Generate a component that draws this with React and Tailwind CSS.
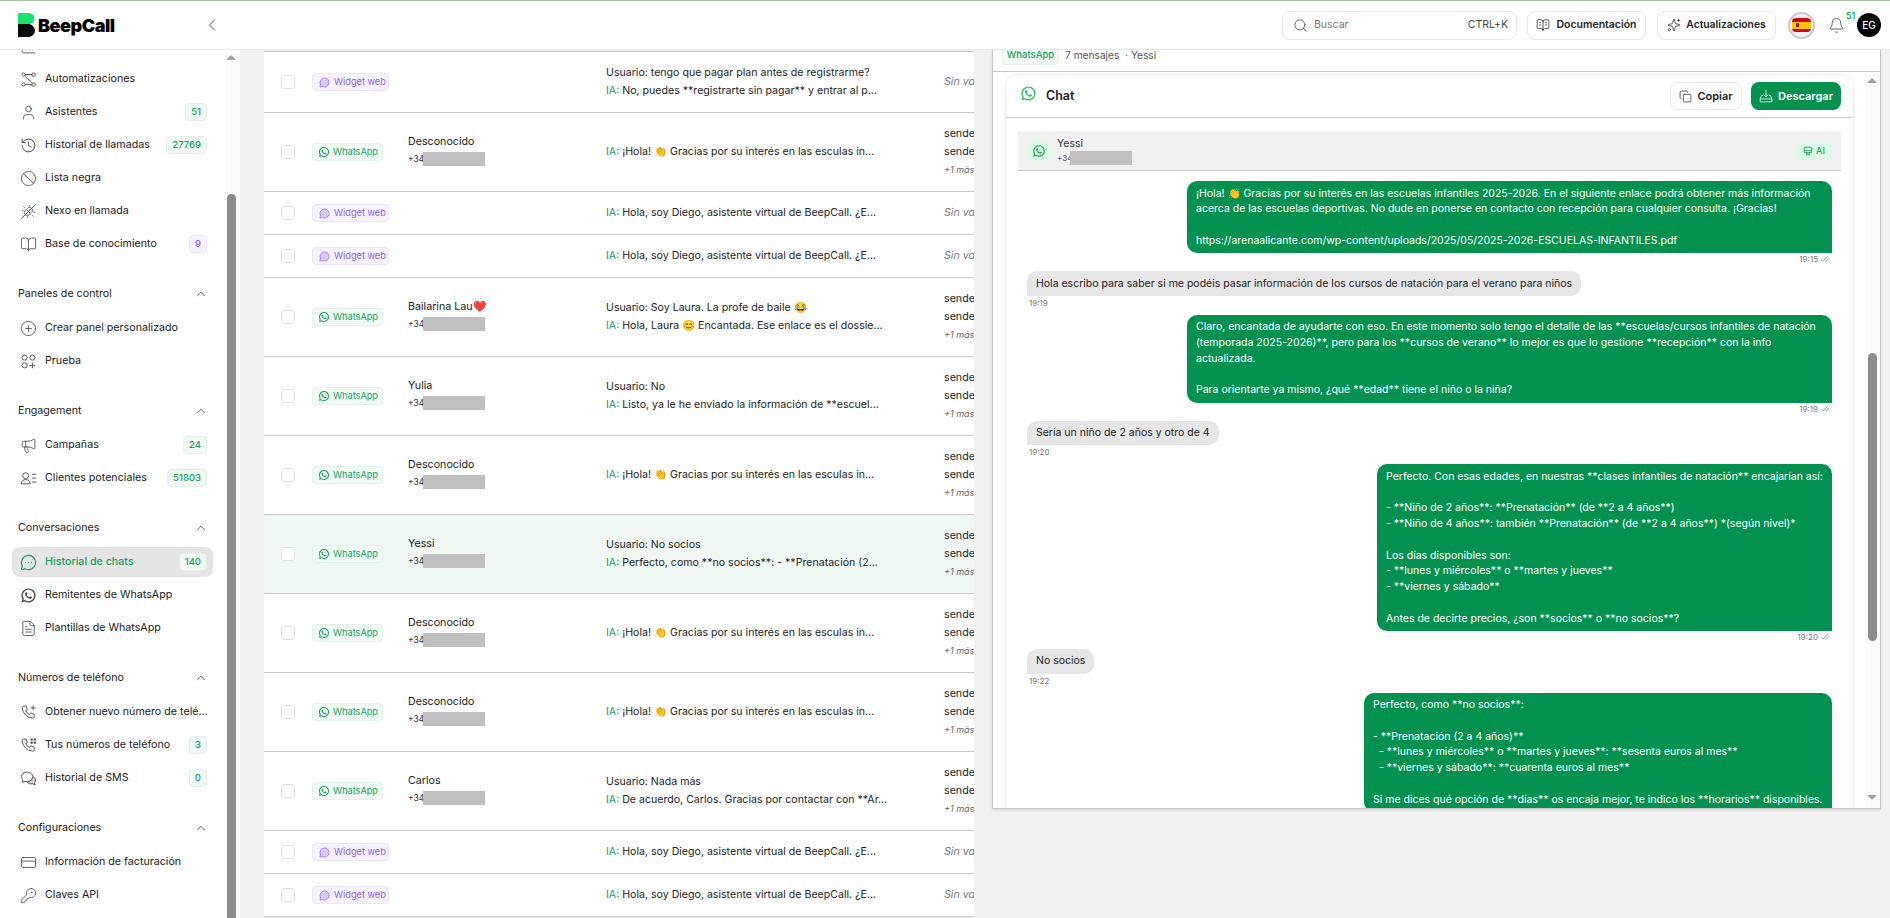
import {
  Ban, BookOpen, ChevronLeft, ChevronUp, CirclePlus, Copy, CreditCard, FileText, History, Bell,
  KeyRound, Megaphone, MessageCircle, MessageCircleMore, Search, Sparkles, User, BarChart3,
  CheckCheck, BookOpenText,
} from 'lucide-react'
import { RiWhatsappLine } from 'react-icons/ri'

const font = { fontFamily: 'Inter, "Noto Sans", sans-serif' }

function AutoIcon(props) {
  return (
    <svg viewBox="0 0 24 24" fill="none" stroke="currentColor" strokeWidth="1.3" {...props}>
      <circle cx="5" cy="5" r="2.2" />
      <circle cx="5" cy="19" r="2.2" />
      <rect x="17" y="3" width="4.4" height="4.4" rx="1" />
      <rect x="17" y="17" width="4.4" height="4.4" rx="1" />
      <path d="M7.2 5H17M7.2 19H17M6.5 7l11 10" />
    </svg>
  )
}

function TestIcon(props) {
  return (
    <svg viewBox="0 0 24 24" fill="none" stroke="currentColor" strokeWidth="1.3" {...props}>
      <circle cx="6.5" cy="6.5" r="3.6" />
      <circle cx="17.5" cy="6.5" r="3.6" />
      <circle cx="6.5" cy="17.5" r="3.6" />
      <path d="M17.5 13.5v8M13.5 17.5h8" />
    </svg>
  )
}

function LeadsIcon(props) {
  return (
    <svg viewBox="0 0 24 24" fill="none" stroke="currentColor" strokeWidth="1.3" {...props}>
      <circle cx="8" cy="8" r="4.2" />
      <path d="M1.5 19.5c.6-4 3.2-6 6.5-6s5.900 2 6.500 6H1.500zM17 6h6M17 11.500h6M17 17h6" />
    </svg>
  )
}

function PhoneGridIcon(props) {
  return (
    <svg viewBox="0 0 24 24" fill="none" stroke="currentColor" strokeWidth="1.3" {...props}>
      <path d="M5 3h3.500l2 5-2.500 1.500a11 11 0 0 0 5.500 5.500l1.500-2.500 5 2v3.500a2 2 0 0 1-2 2A16 16 0 0 1 3 5a2 2 0 0 1 2-2z" />
      <path fill="currentColor" stroke="none" d="M15 2h3v3h-3zM19.500 2h3v3h-3zM15 6.500h3v3h-3zM19.500 6.500h3v3h-3z" />
    </svg>
  )
}

function PhonePlusIcon(props) {
  return (
    <svg viewBox="0 0 24 24" fill="none" stroke="currentColor" strokeWidth="1.3" {...props}>
      <path d="M5 3h3.500l2 5-2.500 1.500a11 11 0 0 0 5.500 5.500l1.500-2.500 5 2v3.500a2 2 0 0 1-2 2A16 16 0 0 1 3 5a2 2 0 0 1 2-2z" />
      <path d="M18.500 2v7M15 5.500h7" />
    </svg>
  )
}

function SmsIcon(props) {
  return (
    <svg viewBox="0 0 24 24" fill="none" stroke="currentColor" strokeWidth="1.3" {...props}>
      <path d="M10 3c-4.700 0-8 2.900-8 6.500 0 1.700.8 3.200 2 4.400L3 17.500l4-1.600c1 .4 2 .6 3 .6 4.700 0 8-3.300 8-7S14.700 3 10 3z" />
      <path fill="currentColor" fillOpacity=".25" d="M18.500 9.500c2.200 1 3.500 2.700 3.500 4.800 0 1.300-.5 2.400-1.400 3.300l.9 3.400-3.700-1.700c-.8.200-1.500.3-2.300.3-2.300 0-4.500-1-5.500-3.100" />
    </svg>
  )
}

function PlugOffIcon(props) {
  return (
    <svg viewBox="0 0 24 24" fill="none" stroke="currentColor" strokeWidth="1.3" {...props}>
      <path d="M2 22 22 2" />
      <path d="m9 9 6 6-1.500 1.500a4.200 4.200 0 0 1-6-6zM10.500 7.500a4.200 4.200 0 0 1 6 6" />
      <path d="M3 11h2M13 3v2M21 13h-2M11 21v-2M5 5l1.500 1.500M19 19l-1.500-1.500" />
    </svg>
  )
}

function TrayDownIcon(props) {
  return (
    <svg viewBox="0 0 24 24" fill="none" stroke="currentColor" strokeWidth="1.3" {...props}>
      <path d="M12 2v11M8 9.500l4 4 4-4" />
      <path d="M7 11H4.500L2 17v5h20v-5l-2.500-6H17M2 17h20" />
    </svg>
  )
}

function MonitorIcon(props) {
  return (
    <svg viewBox="0 0 24 24" fill="none" stroke="currentColor" strokeWidth="2.2" {...props}>
      <rect x="3" y="3" width="18" height="13" rx="2" />
      <path d="M3 11.500h18M9 16v4M15 16v4M7 21h10" />
    </svg>
  )
}

const iconClass = 'h-[17px] w-[17px] shrink-0 text-[#4a4a4a]'

const sections = [
  {
    items: [
      { icon: <AutoIcon className={iconClass} />, label: 'Automatizaciones' },
      { icon: <User className={iconClass} strokeWidth={1.2} />, label: 'Asistentes', badge: '51' },
      { icon: <History className={iconClass} strokeWidth={1.4} />, label: 'Historial de llamadas', badge: '27769' },
      { icon: <Ban className={iconClass} strokeWidth={1.2} />, label: 'Lista negra' },
      { icon: <PlugOffIcon className={iconClass} />, label: 'Nexo en llamada' },
      { icon: <BookOpen className={iconClass} strokeWidth={1.2} />, label: 'Base de conocimiento', badge: '9', purple: true },
    ],
  },
  {
    title: 'Paneles de control',
    items: [
      { icon: <CirclePlus className={iconClass} strokeWidth={1.2} />, label: 'Crear panel personalizado' },
      { icon: <TestIcon className={iconClass} />, label: 'Prueba' },
    ],
  },
  {
    title: 'Engagement',
    items: [
      { icon: <Megaphone className={iconClass} strokeWidth={1.2} />, label: 'Campañas', badge: '24' },
      { icon: <LeadsIcon className={iconClass} />, label: 'Clientes potenciales', badge: '51803' },
    ],
  },
  {
    title: 'Conversaciones',
    items: [
      { icon: <MessageCircleMore className="h-[17px] w-[17px] shrink-0 text-[#16a05d]" strokeWidth={1.6} />, label: 'Historial de chats', badge: '140', active: true },
      { icon: <RiWhatsappLine className={iconClass} />, label: 'Remitentes de WhatsApp' },
      { icon: <FileText className={iconClass} strokeWidth={1.2} />, label: 'Plantillas de WhatsApp' },
    ],
  },
  {
    title: 'Números de teléfono',
    items: [
      { icon: <PhonePlusIcon className={iconClass} />, label: 'Obtener nuevo número de teléfono' },
      { icon: <PhoneGridIcon className={iconClass} />, label: 'Tus números de teléfono', badge: '3' },
      { icon: <SmsIcon className={iconClass} />, label: 'Historial de SMS', badge: '0' },
    ],
  },
  {
    title: 'Configuraciones',
    items: [
      { icon: <CreditCard className={iconClass} strokeWidth={1.2} />, label: 'Información de facturación' },
      { icon: <KeyRound className={iconClass} strokeWidth={1.2} />, label: 'Claves API' },
    ],
  },
]

const hello = '¡Hola! 👏 Gracias por su interés en las esculas in...'
const diego = 'Hola, soy Diego, asistente virtual de BeepCall. ¿E...'

const rows = [
  { kind: 'web', user: 'tengo que pagar plan antes de registrarme?', ai: 'No, puedes **registrarte sin pagar** y entrar al p...', h: 'h-[61px]' },
  { kind: 'wa', name: 'Desconocido', ai: hello },
  { kind: 'web', ai: diego, h: 'h-[43px]' },
  { kind: 'web', ai: diego, h: 'h-[43px]' },
  { kind: 'wa', name: 'Bailarina Lau❤️', user: 'Soy Laura. La profe de baile 😂', ai: 'Hola, Laura 😊 Encantada. Ese enlace es el dossie...' },
  { kind: 'wa', name: 'Yulia', user: 'No', ai: 'Listo, ya le he enviado la información de **escuel...' },
  { kind: 'wa', name: 'Desconocido', ai: hello },
  { kind: 'wa', name: 'Yessi', user: 'No socios', ai: 'Perfecto, como **no socios**: - **Prenatación (2...', active: true },
  { kind: 'wa', name: 'Desconocido', ai: hello },
  { kind: 'wa', name: 'Desconocido', ai: hello },
  { kind: 'wa', name: 'Carlos', user: 'Nada más', ai: 'De acuerdo, Carlos. Gracias por contactar con **Ar...' },
  { kind: 'web', ai: diego, h: 'h-[43px]' },
  { kind: 'web', ai: diego, h: 'h-[43px]' },
]

const messages = [
  { me: true, time: '19:15', w: 'w-[645px]', text: '¡Hola! 👏 Gracias por su interés en las escuelas infantiles 2025-2026. En el siguiente enlace podrá obtener más información acerca de las escuelas deportivas. No dude en ponerse en contacto con recepción para cualquier consulta. ¡Gracias!\n\nhttps://arenaalicante.com/wp-content/uploads/2025/05/2025-2026-ESCUELAS-INFANTILES.pdf' },
  { time: '19:19', text: 'Hola escribo para saber si me podéis pasar información de los cursos de natación para el verano para niños' },
  { me: true, time: '19:19', w: 'w-[645px]', text: 'Claro, encantada de ayudarte con eso. En este momento solo tengo el detalle de las **escuelas/cursos infantiles de natación (temporada 2025-2026)**, pero para los **cursos de verano** lo mejor es que lo gestione **recepción** con la info actualizada.\n\nPara orientarte ya mismo, ¿qué **edad** tiene el niño o la niña?' },
  { time: '19:20', text: 'Sería un niño de 2 años y otro de 4' },
  { me: true, time: '19:20', w: 'w-[455px]', text: 'Perfecto. Con esas edades, en nuestras **clases infantiles de natación** encajarían así:\n\n- **Niño de 2 años**: **Prenatación** (de **2 a 4 años**)\n- **Niño de 4 años**: también **Prenatación** (de **2 a 4 años**) *(según nivel)*\n\nLos días disponibles son:\n- **lunes y miércoles** o **martes y jueves**\n- **viernes y sábado**\n\nAntes de decirte precios, ¿son **socios** o **no socios**?' },
  { time: '19:22', text: 'No socios' },
  { me: true, w: 'w-[468px]', text: 'Perfecto, como **no socios**:\n\n- **Prenatación (2 a 4 años)**\n  - **lunes y miércoles** o **martes y jueves**: **sesenta euros al mes**\n  - **viernes y sábado**: **cuarenta euros al mes**\n\nSi me dices qué opción de **días** os encaja mejor, te indico los **horarios** disponibles.' },
]

function Badge({ children, purple }) {
  return (
    <span
      className={`flex h-[18px] min-w-[18px] items-center justify-center rounded border px-[5px] text-[9.500px] font-medium ${
        purple ? 'border-[#ebe5fb] bg-[#f6f3fe] text-[#8b5cf6]' : 'border-[#dff1e7] bg-[#f0f9f4] text-[#16a05d]'
      }`}
    >
      {children}
    </span>
  )
}

function NavItem({ item }) {
  return (
    <div className={`mb-[3px] flex h-[30px] items-center rounded-lg pl-2 pr-[2px] ${item.active ? 'bg-[#e5e5e5]' : ''}`}>
      <span className="flex w-[25px] shrink-0">{item.icon}</span>
      <span className={`min-w-0 flex-1 truncate text-[10.700px] ${item.active ? 'font-medium text-[#16a05d]' : 'text-[#1a1a1a]'}`}>{item.label}</span>
      {item.badge && (
        <span className="ml-1 shrink-0 pr-[4px]">
          <Badge purple={item.purple}>{item.badge}</Badge>
        </span>
      )}
    </div>
  )
}

function Sidebar() {
  return (
    <aside className="flex h-full w-[240px] shrink-0 bg-white">
      <div className="min-w-0 flex-1 overflow-hidden pl-3 pr-[12px]">
        <div className="-mt-[19px]">
          <NavItem item={{ icon: <BarChart3 className={iconClass} strokeWidth={1.2} />, label: 'Analíticas' }} />
        </div>
        {sections.map((section, i) => (
          <div key={i} className={section.title ? 'mt-[20px]' : ''}>
            {section.title && (
              <div className="mb-[4px] flex h-[30px] items-center justify-between pl-[6px] pr-[5px]">
                <span className="text-[10.700px] text-[#1a1a1a]">{section.title}</span>
                <ChevronUp className="h-[14px] w-[14px] text-[#555]" strokeWidth={1.6} />
              </div>
            )}
            {section.items.map((item) => <NavItem key={item.label} item={item} />)}
          </div>
        ))}
      </div>
      <div className="flex w-[15px] shrink-0 flex-col items-center bg-[#fbfbfb] pr-[3px]">
        <div className="mt-[5px] h-0 w-0 border-x-[5px] border-b-[5px] border-x-transparent border-b-[#a0a0a0]" />
        <div className="mt-[134px] w-[9px] flex-1 rounded-t-full bg-[#8c8c8c]" />
      </div>
    </aside>
  )
}

function Logo() {
  return (
    <div className="flex items-center">
      <svg viewBox="0 0 17 24" className="h-[24px] w-[17px]">
        <path d="M0 0h11a5.500 5.500 0 0 1 5.500 5.500v0A5.500 5.500 0 0 1 11 11H0z" fill="#19e36b" />
        <path d="M0 11h10.500a6.500 6.500 0 0 1 0 13L0 24z" fill="#0a0a0a" />
      </svg>
      <span className="ml-[3px] text-[18px] font-black tracking-tight text-black">BeepCall</span>
    </div>
  )
}

function Flag() {
  return (
    <div className="flex h-[27px] w-[27px] items-center justify-center rounded-full border-2 border-[#c9c9c9] bg-[#eef1ee]">
      <div className="flex h-[14px] w-[19px] flex-col overflow-hidden rounded-sm">
        <div className="h-[3.500px] bg-[#c60b1e]" />
        <div className="flex flex-1 items-center bg-[#ffc400] pl-[4px]"><div className="h-[4px] w-[3px] bg-[#ad1519]" /></div>
        <div className="h-[3.500px] bg-[#c60b1e]" />
      </div>
    </div>
  )
}

function Header() {
  return (
    <header className="flex h-[49px] shrink-0 items-center border-b border-[#e8e8e8] bg-white pr-[9px]">
      <div className="flex w-[240px] items-center justify-between pl-[18px] pr-[18px]">
        <Logo />
        <ChevronLeft className="h-[20px] w-[20px] text-[#555]" strokeWidth={1.2} />
      </div>
      <div className="ml-auto flex items-center">
        <div className="flex h-[29px] w-[235px] items-center rounded-lg border border-[#e6e6e6] pl-[10px] pr-2 text-[10.500px]">
          <Search className="h-[15px] w-[15px] text-[#444]" strokeWidth={1.3} />
          <span className="ml-[6px] text-[#777]">Buscar</span>
          <span className="ml-auto text-[#444]">CTRL+K</span>
        </div>
        <button className="ml-[10px] flex h-[29px] w-[119px] items-center justify-center gap-[6px] rounded-lg border border-[#e6e6e6] text-[10.500px] font-semibold text-[#222]">
          <BookOpenText className="h-[14px] w-[14px]" strokeWidth={1.3} /> Documentación
        </button>
        <button className="ml-[11px] flex h-[29px] w-[119px] items-center justify-center gap-[5px] rounded-lg border border-[#e6e6e6] text-[10.300px] font-semibold text-[#222]">
          <Sparkles className="h-[14px] w-[14px]" strokeWidth={1.3} /> Actualizaciones
        </button>
        <div className="ml-[12px]"><Flag /></div>
        <div className="relative ml-[13px] flex h-6 w-[30px] items-center">
          <Bell className="h-[17px] w-[17px] text-[#444]" strokeWidth={1.2} />
          <span className="absolute -top-[3px] left-[17px] rounded-sm bg-[#e6f7ec] px-[1px] text-[9px] font-medium leading-[11px] text-[#16a05d]">51</span>
        </div>
        <div className="-ml-[1px] flex h-6 w-6 items-center justify-center rounded-full bg-black text-[10px] font-medium text-white">EG</div>
      </div>
    </header>
  )
}

function Channel({ kind }) {
  if (kind === 'web') {
    return (
      <span className="flex h-[18px] w-[77px] items-center gap-[4px] whitespace-nowrap rounded border border-[#ebe5fb] bg-[#f6f3fe] pl-[6px] text-[9.200px] text-[#8b5cf6]">
        <MessageCircle className="h-[11px] w-[11px] shrink-0 fill-[#d9ccfb]" strokeWidth={1.4} /> Widget web
      </span>
    )
  }
  return (
    <span className="flex h-[18px] w-[71px] items-center gap-[3px] whitespace-nowrap rounded border border-[#dff3e6] bg-[#f0fbf4] pl-[5px] text-[9.200px] text-[#16a05d]">
      <RiWhatsappLine className="h-[12px] w-[12px] shrink-0" /> WhatsApp
    </span>
  )
}

function Redacted() {
  return <span className="inline-block h-[14px] w-[62px] bg-[#bfbfbf]" />
}

function Row({ row }) {
  const hasMeta = row.kind === 'wa'
  return (
    <div className={`flex shrink-0 items-center border-b border-[#c6c6c6] pl-[17px] ${row.h || 'h-[79px]'} ${row.active ? 'bg-[#eff8f3]' : 'bg-white'}`}>
      <span className={`h-[14px] w-[14px] shrink-0 rounded-[3px] border border-[#e2e2e2] ${row.active ? 'bg-white' : ''}`} />
      <div className="ml-[17px] w-[96px] shrink-0"><Channel kind={row.kind} /></div>
      <div className="w-[198px] shrink-0 pb-[5px]">
        {row.name && (
          <>
            <p className="text-[10.700px] leading-[18px] text-[#1a1a1a]">{row.name}</p>
            <p className="mt-[1px] flex items-center text-[8.500px] leading-[14px] text-[#333]"><span className="w-[15px]">+34</span><Redacted /></p>
          </>
        )}
      </div>
      <div className="w-[338px] shrink-0 text-[10.600px] leading-[18px] text-[#222]">
        {row.user && <p className="truncate">Usuario: {row.user}</p>}
        <p className="truncate"><span className="text-[#16a05d]">IA:</span> {row.ai}</p>
      </div>
      <div className="min-w-0 flex-1 overflow-hidden whitespace-nowrap text-[10.700px] leading-[18px]">
        {hasMeta ? (
          <>
            <p className="text-[#222]">sender_id</p>
            <p className="text-[#222]">sender_name</p>
            <p className="text-[9px] italic text-[#666]">+1 más</p>
          </>
        ) : (
          <p className="italic text-[#777]">Sin valorar</p>
        )}
      </div>
    </div>
  )
}

function Message({ msg }) {
  if (msg.me) {
    return (
      <div className="flex flex-col items-end">
        <div className={`whitespace-pre-wrap rounded-[10px] rounded-br-none bg-[#03914f] px-[9px] py-[4.500px] text-[10.500px] leading-[15.750px] text-white ${msg.w}`}>
          {msg.text}
        </div>
        {msg.time && (
          <div className="mb-[6px] flex h-[12px] items-center gap-[2px] pr-[2px] text-[8px] text-[#777]">
            {msg.time}
            <CheckCheck className="h-[10px] w-[10px] text-[#16a05d]" strokeWidth={1.5} />
          </div>
        )}
      </div>
    )
  }
  return (
    <div className="flex flex-col items-start">
      <div className="whitespace-pre-wrap rounded-[10px] rounded-bl-none bg-[#e6e6e6] px-[9px] py-[4.500px] text-[10.500px] leading-[15.750px] text-[#222]">
        {msg.text}
      </div>
      <div className="mb-[6px] mt-[1px] h-[12px] pl-[2px] text-[8px] leading-[12px] text-[#777]">{msg.time}</div>
    </div>
  )
}

function ChatDrawer() {
  return (
    <section className="ml-[18px] flex h-[759px] w-[889px] shrink-0 flex-col overflow-hidden border-x border-b border-[#c6c6c6] bg-white shadow-sm">
      <div className="flex h-[22px] shrink-0 items-center border-b border-[#c6c6c6] pl-[9px]">
        <span className="-mt-[10px] flex h-[18px] w-[57px] items-center justify-center rounded border border-[#dff3e6] bg-[#f0fbf4] text-[9.500px] font-medium text-[#16a05d]">WhatsApp</span>
        <span className="-mt-[10px] ml-[6px] whitespace-pre text-[10.200px] text-[#555]">7 mensajes  · Yessi</span>
      </div>
      <div className="flex min-h-0 flex-1 pt-[2px]">
        <div className="ml-[12px] flex w-[849px] shrink-0 flex-col rounded-t-xl border-x border-t border-[#eeeeee]">
          <div className="flex h-[43px] shrink-0 items-center justify-between border-b border-[#c6c6c6] pl-[14px] pr-[12px]">
            <div className="flex items-center">
              <RiWhatsappLine className="-mt-[6px] h-[17px] w-[17px] text-[#25c565]" />
              <span className="ml-[9px] text-[12.500px] font-semibold text-[#222]">Chat</span>
            </div>
            <div className="flex items-center gap-[9px]">
              <button className="flex h-[28px] w-[72px] items-center justify-center gap-[5px] rounded-lg border border-[#e6e6e6] text-[11px] font-semibold text-[#222]">
                <Copy className="h-[13px] w-[13px]" strokeWidth={1.3} /> Copiar
              </button>
              <button className="flex h-[28px] w-[90px] items-center justify-center gap-[5px] rounded-lg bg-[#03914f] text-[11px] font-semibold text-white">
                <TrayDownIcon className="h-[14px] w-[14px]" /> Descargar
              </button>
            </div>
          </div>
          <div className="min-h-0 flex-1 overflow-hidden px-[12px] pt-[13px]">
            <div className="flex h-[40px] items-center border-b border-[#c6c6c6] bg-[#f1f1f1] pl-[9px] pr-[9px]">
              <span className="flex h-6 w-6 items-center justify-center rounded-full bg-[#dcfce7]">
                <RiWhatsappLine className="h-[14px] w-[14px] text-[#16a34a]" />
              </span>
              <div className="ml-[6px]">
                <p className="text-[10.500px] leading-[14px] text-[#333]">Yessi</p>
                <p className="flex items-center text-[8px] leading-[14px] text-[#555]"><span className="w-[13px]">+34</span><Redacted /></p>
              </div>
              <span className="ml-auto flex h-[18px] w-[36px] items-center justify-center gap-[3px] rounded bg-[#dcfce7] text-[9px] font-medium text-[#16a34a]">
                <MonitorIcon className="h-[10px] w-[10px]" /> AI
              </span>
            </div>
            <div className="px-[9px] pt-[10px]">
              {messages.map((msg, i) => <Message key={i} msg={msg} />)}
            </div>
          </div>
        </div>
        <div className="ml-[11px] flex w-[15px] shrink-0 flex-col items-center bg-[#fbfbfb] pr-[1px]">
          <div className="mt-[4px] h-0 w-0 border-x-[5px] border-b-[5px] border-x-transparent border-b-[#a0a0a0]" />
          <div className="mt-[270px] h-[288px] w-[9px] rounded-full bg-[#8c8c8c]" />
          <div className="mb-[8px] mt-auto h-0 w-0 border-x-[5px] border-t-[5px] border-x-transparent border-t-[#a0a0a0]" />
        </div>
      </div>
    </section>
  )
}

export default function App() {
  return (
    <div className="flex h-screen flex-col overflow-hidden border-t border-[#a9c5a6] bg-[#f1f1f1]" style={font}>
      <Header />
      <div className="flex min-h-0 flex-1">
        <Sidebar />
        <main className="flex min-w-0 flex-1 items-start bg-[#f1f1f1]">
          <div className="ml-[24px] flex h-full w-[710px] shrink-0 flex-col overflow-hidden">
            <div className="h-[2px] shrink-0 border-b border-[#c6c6c6]" />
            {rows.map((row, i) => <Row key={i} row={row} />)}
          </div>
          <ChatDrawer />
        </main>
      </div>
    </div>
  )
}
